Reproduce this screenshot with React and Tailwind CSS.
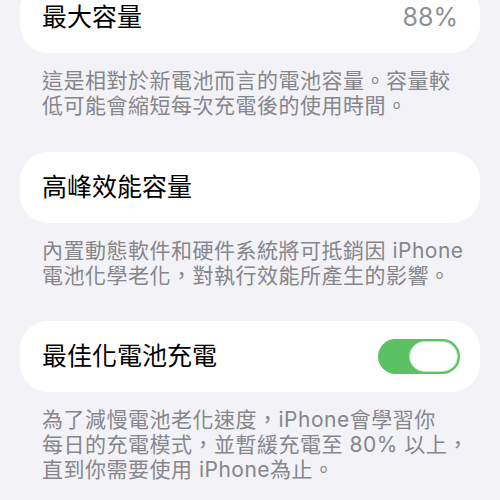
export default function App() {
  const font = { fontFamily: 'Inter, "Noto Sans CJK TC", sans-serif' };
  return (
    <div
      className="w-[500px] h-[500px] overflow-hidden bg-[#f2f2f7] px-[20px]"
      style={font}
    >
      <div className="-mt-[18px] h-[71px] rounded-[28px] bg-white flex items-center justify-between pl-[22px] pr-[22px]">
        <span className="text-[25px] text-black">最大容量</span>
        <span className="text-[25px] text-[#8e8e93]">88%</span>
      </div>
      <p className="mt-[15px] pl-[22px] text-[21px] leading-[25px] tracking-[0.5px] text-[#86868b] whitespace-nowrap">
        這是相對於新電池而言的電池容量。容量較
        <br />
        低可能會縮短每次充電後的使用時間。
      </p>

      <div className="mt-[34px] h-[71px] rounded-[28px] bg-white flex items-center pl-[22px] pr-[22px]">
        <span className="text-[25px] text-black">高峰效能容量</span>
      </div>
      <p className="mt-[15px] pl-[22px] text-[21px] leading-[25px] tracking-[0.5px] text-[#86868b] whitespace-nowrap">
        內置動態軟件和硬件系統將可抵銷因 iPhone
        <br />
        電池化學老化，對執行效能所產生的影響。
      </p>

      <div className="mt-[33px] h-[71px] rounded-[28px] bg-white flex items-center justify-between pl-[22px] pr-[20px]">
        <span className="text-[25px] text-black">最佳化電池充電</span>
        <div className="w-[82px] h-[35px] rounded-full bg-[#5ac262] p-[2px] flex justify-end">
          <div className="w-[49px] h-[31px] rounded-full bg-white border border-[#bfe6c2]" />
        </div>
      </div>
      <p className="mt-[15px] pl-[22px] text-[21px] leading-[25px] tracking-[0.5px] text-[#86868b] whitespace-nowrap">
        為了減慢電池老化速度，iPhone會學習你
        <br />
        每日的充電模式，並暫緩充電至 80% 以上，
        <br />
        直到你需要使用 iPhone為止。
      </p>
    </div>
  );
}
